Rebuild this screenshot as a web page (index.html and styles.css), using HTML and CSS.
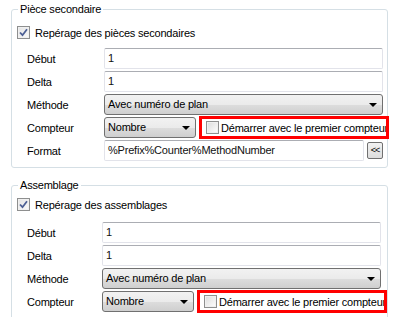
FILE: index.html
```html
<!DOCTYPE html>
<html lang="fr">
<head>
  <meta charset="UTF-8">
  <title>Repérage</title>
  <link rel="stylesheet" href="styles.css">
</head>
<body>
  <!-- Pièce secondaire -->
  <fieldset class="group group-part">
    <legend>Pièce secondaire</legend>
    <label class="check-line">
      <span class="box checked"><svg viewBox="0 0 9 9" width="9" height="9"><path d="M1 4.5 L3.5 7.2 L8 1.2" fill="none" stroke="#4c5f94" stroke-width="1.8"/></svg></span>
      Repérage des pièces secondaires
    </label>
    <div class="form">
      <span class="label">Début</span>
      <div class="field"><span class="input">1</span></div>

      <span class="label">Delta</span>
      <div class="field"><span class="input">1</span></div>

      <span class="label">Méthode</span>
      <div class="field"><span class="select">Avec numéro de plan<i class="arrow"></i></span></div>

      <span class="label">Compteur</span>
      <div class="field">
        <span class="select small">Nombre<i class="arrow"></i></span>
        <span class="mark">
          <span class="box"></span>
          <span class="mark-text">Démarrer avec le premier compteur</span>
        </span>
      </div>

      <span class="label">Format</span>
      <div class="field">
        <span class="input format">%Prefix%Counter%MethodNumber</span>
        <span class="btn-small">&lt;&lt;</span>
      </div>
    </div>
  </fieldset>

  <!-- Assemblage -->
  <fieldset class="group group-assembly">
    <legend>Assemblage</legend>
    <label class="check-line">
      <span class="box checked"><svg viewBox="0 0 9 9" width="9" height="9"><path d="M1 4.5 L3.5 7.2 L8 1.2" fill="none" stroke="#4c5f94" stroke-width="1.8"/></svg></span>
      Repérage des assemblages
    </label>
    <div class="form">
      <span class="label">Début</span>
      <div class="field"><span class="input">1</span></div>

      <span class="label">Delta</span>
      <div class="field"><span class="input">1</span></div>

      <span class="label">Méthode</span>
      <div class="field"><span class="select">Avec numéro de plan<i class="arrow"></i></span></div>

      <span class="label">Compteur</span>
      <div class="field">
        <span class="select small">Nombre<i class="arrow"></i></span>
        <span class="mark">
          <span class="box"></span>
          <span class="mark-text">Démarrer avec le premier compteur</span>
        </span>
      </div>
    </div>
  </fieldset>
</body>
</html>
```

FILE: styles.css
```css
/* base */
body {
  margin: 0;
  padding: 3px 0 0 11px;
  background: #fff;
  font-family: "Liberation Sans", Arial, sans-serif;
  font-size: 11px;
  letter-spacing: -0.2px;
  color: #000;
  overflow: hidden;
}

/* group box */
.group {
  width: 366px;
  margin: 0;
  padding: 0 4px 6px 5px;
  border: 1px solid #d5dfe5;
  border-radius: 3px;
}

.group legend {
  margin-left: 1px;
  padding: 0 2px;
  line-height: 13px;
}

.group-assembly {
  margin-top: 11px;
  height: 150px;
}

/* checkbox line */
.check-line {
  display: flex;
  align-items: center;
  gap: 5px;
  height: 15px;
  margin-top: 9px;
}

.group-assembly .check-line {
  margin-top: 5px;
}

.box {
  width: 11px;
  height: 11px;
  border: 1px solid #8e8f8f;
  background: linear-gradient(135deg, #dcdcdc, #f4f4f4 70%, #fff);
  box-shadow: inset 0 0 0 1px #f0f0f0;
  display: flex;
  align-items: center;
  justify-content: center;
  flex: none;
}

.box.checked {
  background: linear-gradient(135deg, #e4e4e4, #fafafa);
}

/* form grid */
.form {
  display: grid;
  grid-template-columns: 77px 1fr;
  grid-auto-rows: 21px;
  row-gap: 2px;
  margin-top: 8px;
  padding-left: 10px;
}

.group-assembly .form {
  grid-template-columns: 75px 1fr;
  margin-top: 10px;
  margin-right: 2px;
}

.form .label {
  display: flex;
  align-items: center;
}

.field {
  display: flex;
  align-items: center;
  min-width: 0;
}

.input {
  box-sizing: border-box;
  flex: 1;
  height: 21px;
  padding: 0 3px;
  border: 1px solid #e2e3ea;
  border-top-color: #abadb3;
  border-radius: 2px;
  line-height: 19px;
  color: #111;
}

.input.format {
  flex: none;
  width: 260px;
}

.select {
  box-sizing: border-box;
  flex: 1;
  position: relative;
  height: 21px;
  padding: 0 3px;
  border: 1px solid #707070;
  border-radius: 3px;
  background: linear-gradient(#f2f2f2 0%, #ebebeb 50%, #dddddd 51%, #cfcfcf 100%);
  line-height: 19px;
}

.select.small {
  flex: none;
  width: 92px;
}

.arrow {
  position: absolute;
  right: 5px;
  top: 8px;
  border-left: 4px solid transparent;
  border-right: 4px solid transparent;
  border-top: 4px solid #000;
}

/* highlighted checkbox */
.mark {
  box-sizing: border-box;
  flex: none;
  display: flex;
  align-items: center;
  gap: 2px;
  width: 190px;
  height: 23px;
  margin-left: 3px;
  padding-left: 4px;
  border: 3px solid #f00;
  overflow: hidden;
  white-space: nowrap;
}

.mark-text {
  overflow: hidden;
}

.btn-small {
  box-sizing: border-box;
  width: 17px;
  height: 17px;
  margin-left: 3px;
  border: 1px solid #707070;
  border-radius: 2px;
  background: linear-gradient(#f2f2f2, #dcdcdc);
  font-size: 9px;
  line-height: 14px;
  text-align: center;
  letter-spacing: -1px;
}
```
